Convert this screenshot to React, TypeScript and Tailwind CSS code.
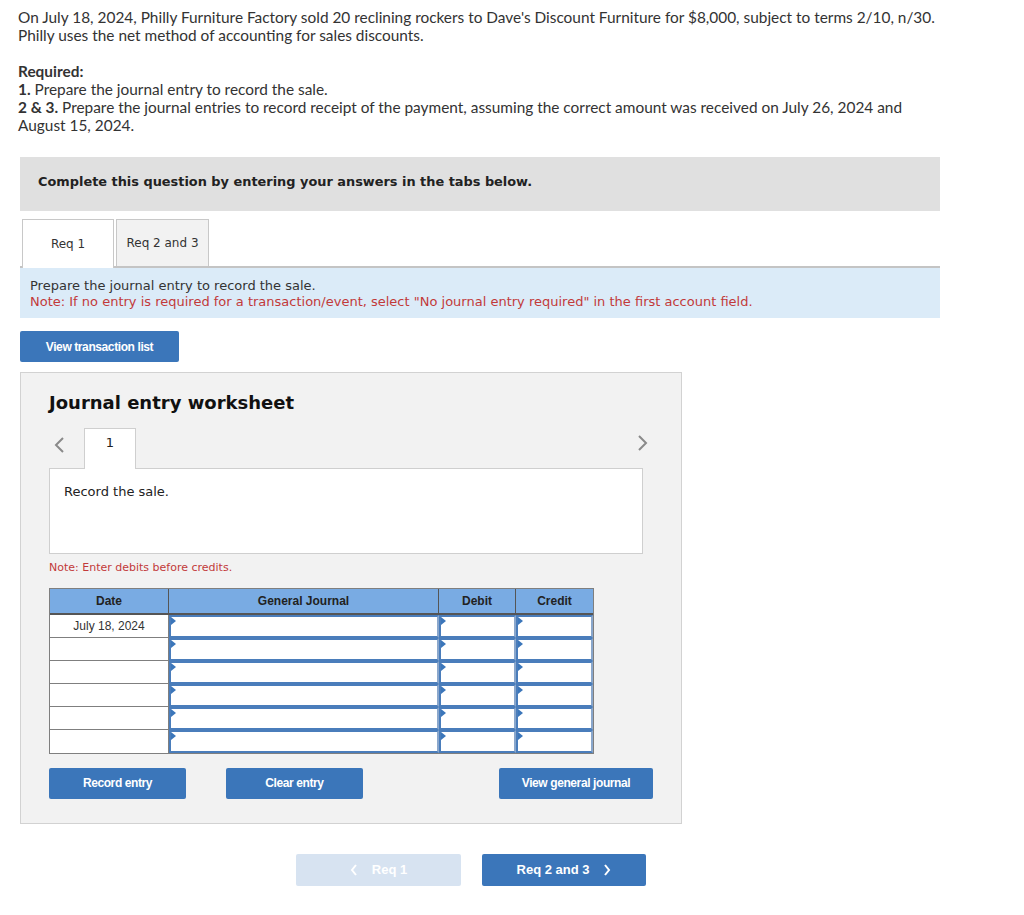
import React from 'react'

const verdana = { fontFamily: '"DejaVu Sans", Verdana, sans-serif' }
const arial = { fontFamily: '"Liberation Sans", Arial, sans-serif' }
const proxima = { fontFamily: 'Lato, "Liberation Sans", sans-serif' }

const BlueButton = ({ text, className = '' }: { text: string; className?: string }) => (
  <button
    className={`flex h-[31px] items-center justify-center rounded-[2px] bg-[#3b76ba] text-[12px] font-bold tracking-[-0.4px] text-white ${className}`}
    style={arial}
  >
    {text}
  </button>
)

const Marker = () => (
  <span className="absolute left-0 top-0 h-0 w-0 border-y-[4px] border-l-[5px] border-y-transparent border-l-[#3b76ba]" />
)

const InputCell = () => (
  <div className="relative h-[23px] border-2 border-[#4a7dbb] border-r-[#8aa7cc] bg-white">
    <Marker />
  </div>
)

const JournalTable = () => {
  const rows = ['July 18, 2024', '', '', '', '', '']
  return (
    <div className="w-[545px] border border-[#7f7f7f]" style={arial}>
      <div className="grid h-[26px] grid-cols-[119px_270px_77px_77px] border-b-2 border-[#555] bg-[#79abe3] text-[12px] font-bold text-[#222]">
        <div className="flex items-center justify-center border-r border-[#555]">Date</div>
        <div className="flex items-center justify-center border-r border-[#555]">General Journal</div>
        <div className="flex items-center justify-center border-r border-[#555]">Debit</div>
        <div className="flex items-center justify-center">Credit</div>
      </div>
      {rows.map((d, i) => (
        <div key={i} className="grid grid-cols-[119px_270px_77px_77px] bg-white">
          <div
            className={`flex h-[23px] items-center justify-center border-r border-[#7f7f7f] text-[12px] text-[#333] ${
              i < rows.length - 1 ? 'border-b' : ''
            }`}
          >
            {d}
          </div>
          <InputCell />
          <InputCell />
          <InputCell />
        </div>
      ))}
    </div>
  )
}

export default function App() {
  return (
    <div className="min-h-[915px] w-[1024px] bg-white pb-10">
      <div className="w-[968px] px-[18px] pt-[8px] text-[15.4px] leading-[18px] text-[#333]" style={proxima}>
        <p>
          On July 18, 2024, Philly Furniture Factory sold 20 reclining rockers to Dave's Discount Furniture for $8,000,
          subject to terms 2/10, n/30. Philly uses the net method of accounting for sales discounts.
        </p>
        <p className="mt-[18px] font-bold">Required:</p>
        <p>
          <b>1.</b> Prepare the journal entry to record the sale.
        </p>
        <p>
          <b>2 &amp; 3.</b> Prepare the journal entries to record receipt of the payment, assuming the correct amount
          was received on July 26, 2024 and August 15, 2024.
        </p>
      </div>

      <div className="ml-[20px] w-[920px]">
        <div
          className="mt-[23px] flex h-[54px] items-center bg-[#e0e0e0] pb-[5px] pl-[18px] text-[12.9px] font-bold text-[#222]"
          style={verdana}
        >
          Complete this question by entering your answers in the tabs below.
        </div>

        <div className="mt-[8px] flex items-end gap-[2px] border-b-2 border-[#c4c4c4] pl-[2px] text-[12px] text-[#333]" style={verdana}>
          <div className="-mb-[2px] flex h-[49px] w-[92px] items-center justify-center border border-b-0 border-[#c8c8c8] bg-white">
            Req 1
          </div>
          <div className="flex h-[47px] w-[93px] items-center justify-center border border-b-0 border-[#c8c8c8] bg-[#f2f2f2]">
            Req 2 and 3
          </div>
        </div>

        <div className="bg-[#dbebf8] px-[10px] pb-[8px] pt-[10px] text-[13px] leading-[16px]" style={verdana}>
          <p className="text-[#333]">Prepare the journal entry to record the sale.</p>
          <p className="text-[#c23a3a]">
            Note: If no entry is required for a transaction/event, select "No journal entry required" in the first
            account field.
          </p>
        </div>

        <BlueButton text="View transaction list" className="mt-[13px] w-[159px]" />

        <div className="mt-[10px] w-[662px] border border-[#d2d2d2] bg-[#f2f2f2] px-[28px] pb-[24px] pt-[16px]">
          <h2 className="text-[18px] font-bold text-[#111]" style={verdana}>
            Journal entry worksheet
          </h2>

          <div className="mt-[12px] flex w-[594px] items-end">
            <span className="mb-[14px] ml-[4px] w-[31px] text-[#8a8a8a]">
              <svg width="12" height="18" viewBox="0 0 12 18" fill="none">
                <path d="M10 2 L3 9 L10 16" stroke="#8a8a8a" strokeWidth="2" />
              </svg>
            </span>
            <div
              className="-mb-px flex h-[41px] w-[52px] items-start justify-center border border-b-0 border-[#cfcfcf] bg-white pt-[4px] text-[13px] text-[#222]"
              style={verdana}
            >
              1
            </div>
            <span className="mb-[16px] ml-auto mr-[-6px]">
              <svg width="12" height="18" viewBox="0 0 12 18" fill="none">
                <path d="M2 2 L9 9 L2 16" stroke="#8a8a8a" strokeWidth="2" />
              </svg>
            </span>
          </div>
          <div className="h-[86px] w-[594px] border border-[#cfcfcf] bg-white px-[14px] pt-[13px] text-[13px] text-[#222]" style={verdana}>
            Record the sale.
          </div>

          <p className="mt-[6px] text-[11px] text-[#c23a3a]" style={verdana}>
            Note: Enter debits before credits.
          </p>

          <div className="mt-[11px]">
            <JournalTable />
          </div>

          <div className="mt-[14px] flex w-[604px] items-center">
            <BlueButton text="Record entry" className="w-[137px]" />
            <BlueButton text="Clear entry" className="ml-[40px] w-[137px]" />
            <BlueButton text="View general journal" className="ml-auto w-[154px]" />
          </div>
        </div>

        <div className="mt-[30px] flex gap-[21px] pl-[276px]">
          <button
            className="flex h-[32px] w-[165px] items-center justify-center gap-[14px] rounded-[2px] bg-[#d7e3f1] text-[13px] font-bold text-white"
            style={arial}
          >
            <svg width="8" height="12" viewBox="0 0 8 12" fill="none">
              <path d="M6 1 L2 6 L6 11" stroke="white" strokeWidth="2" />
            </svg>
            Req 1
          </button>
          <button
            className="flex h-[32px] w-[164px] items-center justify-center gap-[14px] rounded-[2px] bg-[#3b76ba] text-[13px] font-bold text-white"
            style={arial}
          >
            Req 2 and 3
            <svg width="8" height="12" viewBox="0 0 8 12" fill="none">
              <path d="M2 1 L6 6 L2 11" stroke="white" strokeWidth="2" />
            </svg>
          </button>
        </div>
      </div>
    </div>
  )
}
